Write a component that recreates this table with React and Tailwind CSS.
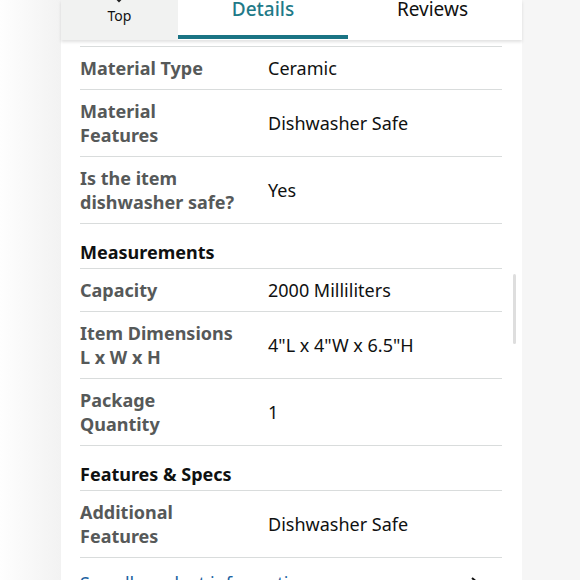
import React from "react";

const rows = [
  { type: "row", label: ["Material Type"], value: "Ceramic" },
  { type: "row", label: ["Material", "Features"], value: "Dishwasher Safe" },
  { type: "row", label: ["Is the item", "dishwasher safe?"], value: "Yes" },
  { type: "head", label: "Measurements" },
  { type: "row", label: ["Capacity"], value: "2000 Milliliters" },
  { type: "row", label: ["Item Dimensions", "L x W x H"], value: '4"L x 4"W x 6.5"H' },
  { type: "row", label: ["Package", "Quantity"], value: "1" },
  { type: "head", label: "Features & Specs" },
  { type: "row", label: ["Additional", "Features"], value: "Dishwasher Safe" },
];

export default function App() {
  return (
    <div
      className="w-[580px] h-[580px] overflow-hidden flex bg-[#f7f7f7]"
      style={{ fontFamily: '"Noto Sans", "Open Sans", sans-serif' }}
    >
      <div className="w-[61px] shrink-0 bg-gradient-to-r from-[#fefefe] to-[#f2f2f2]" />
      <div className="w-[461px] shrink-0 bg-white relative">
        {/* tab bar */}
        <div className="flex h-[40px] bg-white shadow-[0_2px_3px_rgba(0,0,0,0.12)] relative z-10">
          <div className="w-[117px] bg-[#f1f2f1] flex flex-col items-center relative">
            <svg width="20" height="12" viewBox="0 0 20 12" className="absolute -top-[5px] left-[48px]">
              <path d="M4 0 L10 6 L16 0" stroke="#222" strokeWidth="2" fill="none" />
            </svg>
            <span className="absolute top-[6px] text-[14px] leading-[20px] text-[#111]">Top</span>
          </div>
          <div className="w-[170px] relative flex justify-center">
            <span className="absolute -top-[4px] text-[19px] leading-[26px] text-[#1f7a88] font-medium">Details</span>
            <div className="absolute left-0 right-0 bottom-[1px] h-[4px] bg-[#1a7484]" />
          </div>
          <div className="w-[174px] relative flex justify-center">
            <span className="absolute -top-[4px] right-[54px] text-[19px] leading-[26px] text-[#111]">Reviews</span>
          </div>
        </div>
        <div className="pl-[19px] pr-[20px] pt-[6px]">
          <div className="border-t border-[#d9dcdc]" />
          {rows.map((r, i) =>
            r.type === "head" ? (
              <div key={i} className="pt-[16px] pb-[4px] border-b border-[#d9dcdc] text-[18px] leading-[24px] font-bold text-[#0f1111]">
                {r.label}
              </div>
            ) : (
              <div key={i} className="flex items-center py-[9px] border-b border-[#d9dcdc] text-[18px] leading-[24px]">
                <div className="w-[188px] shrink-0 font-bold text-[#565959]">
                  {r.label.map((l, j) => (
                    <div key={j}>{l}</div>
                  ))}
                </div>
                <div className="text-[#0f1111]">{r.value}</div>
              </div>
            )
          )}
          <div className="flex items-center justify-between pt-[13px] pr-[20px] text-[18px] leading-[24px] text-[#2162a1]">
            <span>See all product information</span>
            <svg width="14" height="14" viewBox="0 0 14 14">
              <path d="M4 2 L10 7 L4 12" stroke="#111" strokeWidth="2" fill="none" />
            </svg>
          </div>
        </div>
        <div className="absolute left-[452px] top-[274px] w-[3px] h-[70px] bg-[#dedede] rounded" />
      </div>
      <div className="flex-1 bg-[#f6f6f6]" />
    </div>
  );
}
